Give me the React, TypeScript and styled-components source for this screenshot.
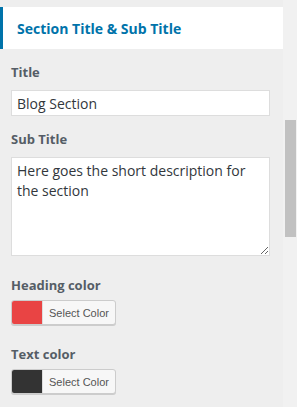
import React from 'react'
import styled, { createGlobalStyle } from 'styled-components'

const GlobalStyle = createGlobalStyle`
	html, body {
		margin: 0;
		padding: 0;
		background: #eeeeee;
		font-family: "Open Sans", "Noto Sans", sans-serif;
	}
`

const Screen = styled.div`
	display: flex;
	width: 297px;
	height: 407px;
	overflow: hidden;
	background: #eeeeee;
`
const Panel = styled.div`
	width: 283px;
	padding-top: 7px;
`
const SectionHeader = styled.h3`
	margin: 0;
	height: 42px;
	display: flex;
	align-items: center;
	padding-left: 14px;
	background: #ffffff;
	border-left: 3px solid #0073aa;
	color: #0073aa;
	font-size: 14px;
	font-weight: 700;
`
const Fields = styled.div`
	padding: 14px 13px 0 11px;
	display: flex;
	flex-direction: column;
`
const Field = styled.div<{ $after: number }>`
	display: flex;
	flex-direction: column;
	margin-bottom: ${({ $after }) => $after}px;
`
const Label = styled.label<{ $tight?: boolean }>`
	color: #555d66;
	font-size: 13px;
	font-weight: 700;
	line-height: 18px;
	margin-bottom: ${({ $tight }) => ($tight ? 6 : 9)}px;
`
const TextInput = styled.input`
	box-sizing: border-box;
	width: 259px;
	height: 26px;
	margin: 0;
	padding: 0 5px;
	border: 1px solid #dddddd;
	background: #ffffff;
	color: #32373c;
	font-family: inherit;
	font-size: 14px;
	outline: none;
`
const TextArea = styled.textarea`
	box-sizing: border-box;
	width: 259px;
	height: 99px;
	margin: 0;
	padding: 3px 5px;
	border: 1px solid #dddddd;
	background: #ffffff;
	color: #32373c;
	font-family: inherit;
	font-size: 14px;
	line-height: 20px;
	outline: none;
`
const ColorButton = styled.button`
	display: flex;
	align-items: stretch;
	width: 105px;
	height: 25px;
	padding: 0;
	border: 1px solid #cccccc;
	border-radius: 3px;
	background: #f7f7f7;
	overflow: hidden;
	cursor: pointer;
	box-shadow: 0 1px 0 #cccccc;
`
const Swatch = styled.span<{ $color: string }>`
	width: 30px;
	background: ${({ $color }) => $color};
`
const ButtonText = styled.span`
	flex: 1;
	display: flex;
	align-items: center;
	justify-content: center;
	border-left: 1px solid #dddddd;
	color: #555555;
	font-family: inherit;
	font-size: 11px;
`
const Track = styled.div`
	width: 14px;
	background: #f1f1f1;
	padding: 120px 1px 0 2px;
`
const Thumb = styled.div`
	height: 117px;
	background: #c1c1c1;
`

const ColorControl = ({ label, color }: { label: string; color: string }) => (
	<Field $after={20}>
		<Label $tight>{label}</Label>
		<ColorButton type="button">
			<Swatch $color={color} />
			<ButtonText>Select Color</ButtonText>
		</ColorButton>
	</Field>
)

const App = () => {
	return (
		<Screen>
			<GlobalStyle />
			<Panel>
				<SectionHeader>Section Title &amp; Sub Title</SectionHeader>
				<Fields>
					<Field $after={14}>
						<Label>Title</Label>
						<TextInput defaultValue="Blog Section" />
					</Field>
					<Field $after={20}>
						<Label>Sub Title</Label>
						<TextArea defaultValue="Here goes the short description for the section" />
					</Field>
					<ColorControl label="Heading color" color="#e94444" />
					<ColorControl label="Text color" color="#333333" />
				</Fields>
			</Panel>
			<Track>
				<Thumb />
			</Track>
		</Screen>
	)
}

export default App
